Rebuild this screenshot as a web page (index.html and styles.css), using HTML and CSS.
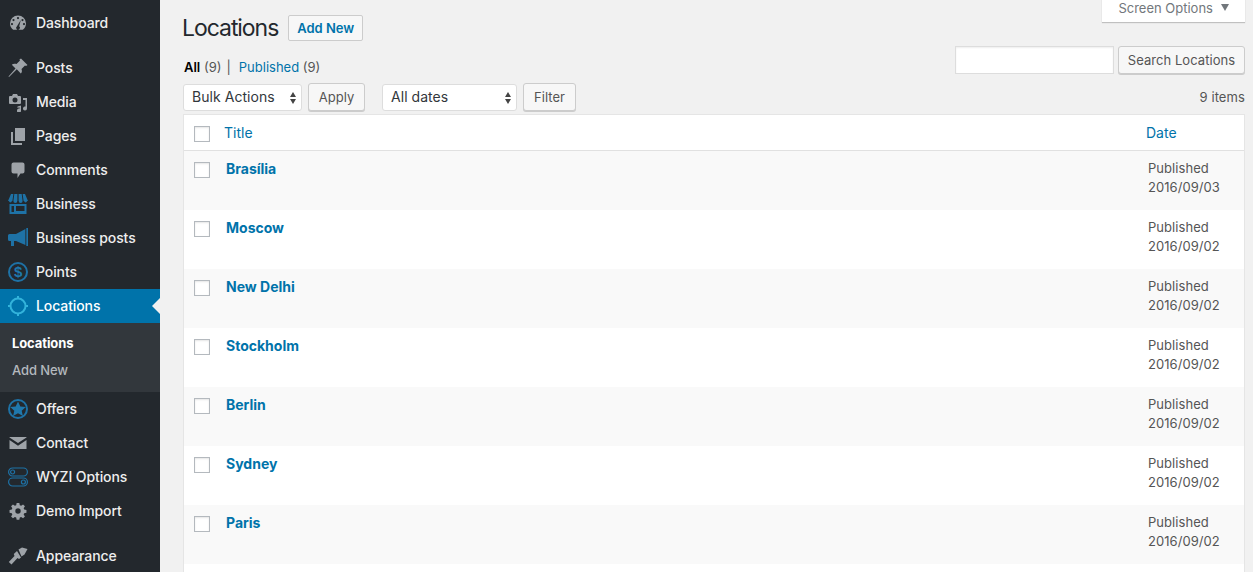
FILE: index.html
```html
<!DOCTYPE html>
<html lang="en">
<head>
<meta charset="utf-8">
<title>Locations</title>
<link rel="stylesheet" href="styles.css">
</head>
<body>
<div class="layout">
  <nav class="sidebar">
    <ul class="menu">
      <li class="item">
        <svg class="ico" viewBox="0 0 20 20"><path fill-rule="evenodd" d="M10 2.500a8 8 0 0 0-8 8c0 2.600 1.200 4.900 3.200 6.300h9.600A8 8 0 0 0 18 10.500a8 8 0 0 0-8-8zM10 4a1.100 1.100 0 1 1 0 2.200A1.100 1.100 0 0 1 10 4zM5.500 6a1.100 1.100 0 1 1 0 2.200A1.100 1.100 0 0 1 5.500 6zM14.500 6a1.100 1.100 0 1 1 0 2.200 1.100 1.100 0 0 1 0-2.200zM4 10a1.100 1.100 0 1 1 0 2.200A1.100 1.100 0 0 1 4 10zM16 10a1.100 1.100 0 1 1 0 2.200A1.100 1.100 0 0 1 16 10zM12.800 7l-1.600 6.300a1.900 1.900 0 1 1-2.400.1z"/></svg>
        <span>Dashboard</span>
      </li>
      <li class="item gap">
        <svg class="ico" viewBox="0 0 20 20"><path d="M13 .5l6.500 6.500-1.500 1-1-.6-3.500 3.500c.8 2 .4 3.600-.7 4.700L8.800 11.200 1 19l-.5-.5 7-8-3.700-3.700c1.100-1.100 2.900-1.400 4.700-.7L12 2.600l-.6-1z"/></svg>
        <span>Posts</span>
      </li>
      <li class="item">
        <svg class="ico" viewBox="0 0 20 20"><path fill-rule="evenodd" d="M2 4h2l1-2h4l1 2h2a1 1 0 0 1 1 1v6a1 1 0 0 1-1 1H2a1 1 0 0 1-1-1V5a1 1 0 0 1 1-1zm5 1.500a2.500 2.500 0 1 0 0 5 2.500 2.500 0 0 0 0-5zM15 6h4v10.500a2 2 0 1 1-1.500-1.900V8H15zM9.500 14.500L13 13.600v5a2 2 0 1 1-1.500-1.900v-1.400L9.500 16z"/></svg>
        <span>Media</span>
      </li>
      <li class="item">
        <svg class="ico" viewBox="0 0 20 20"><path d="M7 2h10v13H7zM3 6h2v11h9v2H3z"/></svg>
        <span>Pages</span>
      </li>
      <li class="item">
        <svg class="ico" viewBox="0 0 20 20"><path d="M5.500 2.500h9a2 2 0 0 1 2 2v7a2 2 0 0 1-2 2H12.500L9.500 18v-4.500h-4a2 2 0 0 1-2-2v-7a2 2 0 0 1 2-2z"/></svg>
        <span>Comments</span>
      </li>
      <li class="item">
        <svg class="ico accent" viewBox="0 0 20 20"><path d="M3 0h2.400L4.400 7H0zM6.300 0h3.100v7H5.400zM10.600 0h3.100l.9 7h-4zM14.600 0H17l3 7h-4.400z"/><path d="M1 7h2.800a1.400 1.400 0 0 1-2.800 0zM5.400 7h3.900a1.950 1.950 0 0 1-3.900 0zM10.700 7h3.900a1.950 1.950 0 0 1-3.900 0zM16.200 7H19a1.400 1.400 0 0 1-2.800 0z"/><path fill-rule="evenodd" d="M1.500 10h17v10h-17zM3.500 12v6H6v-6zM8 12v5h8.500v-5z"/></svg>
        <span>Business</span>
      </li>
      <li class="item">
        <svg class="ico accent" viewBox="0 0 20 20"><path d="M18.300 0H20v18h-1.700zM17.400 1v16L8 13H6v5H3v-5H1.500A1.500 1.500 0 0 1 0 11.500v-4A1.500 1.500 0 0 1 1.500 6H8z"/></svg>
        <span>Business posts</span>
      </li>
      <li class="item">
        <svg class="ico" viewBox="0 0 20 20"><circle class="ring" cx="10" cy="10" r="9"/><text class="dollar" x="10" y="15">$</text></svg>
        <span>Points</span>
      </li>
      <li class="item current">
        <svg class="ico" viewBox="0 0 20 20"><circle class="target" cx="10" cy="10" r="7.500"/><path class="target" d="M10 0v3M10 17v3M0 10h3M17 10h3"/></svg>
        <span>Locations</span>
      </li>
      <li>
        <ul class="submenu">
          <li class="sub-item sub-current">Locations</li>
          <li class="sub-item">Add New</li>
        </ul>
      </li>
      <li class="item">
        <svg class="ico" viewBox="0 0 20 20"><circle class="ring" cx="10" cy="10" r="9"/><path class="star" d="M10 2.500l2.300 5 5.500.6-4.100 3.600 1.200 5.400-4.900-2.800-4.900 2.800 1.200-5.400L2.200 8.100l5.500-.6z"/></svg>
        <span>Offers</span>
      </li>
      <li class="item">
        <svg class="ico" viewBox="0 0 20 20"><path d="M1.500 4h17v.5L10 10 1.500 4.500zM1.500 7l8.500 5.800L18.500 7v9h-17z"/></svg>
        <span>Contact</span>
      </li>
      <li class="item">
        <svg class="ico" viewBox="0 0 20 20"><rect class="ring thin" x=".6" y="1" width="18.800" height="8" rx="4"/><circle class="ring thin" cx="4.600" cy="5" r="2"/><rect class="ring thin" x=".6" y="11" width="18.800" height="8" rx="4"/><circle class="ring thin" cx="15.400" cy="15" r="2"/></svg>
        <span>WYZI Options</span>
      </li>
      <li class="item">
        <svg class="ico" viewBox="0 0 20 20"><path fill-rule="evenodd" d="M8.500 1.500h3l.5 2.500 1.500.6 2.100-1.400 2.100 2.100-1.400 2.100.6 1.500 2.500.5v3l-2.500.5-.6 1.500 1.400 2.100-2.100 2.100-2.100-1.400-1.500.6-.5 2.500h-3l-.5-2.500-1.500-.6-2.100 1.400-2.100-2.100 1.400-2.100-.6-1.500-2.500-.5v-3l2.500-.5.6-1.500-1.400-2.100 2.100-2.100 2.100 1.400 1.500-.6zM10 7.500a3 3 0 1 0 0 6 3 3 0 0 0 0-6z" transform="translate(1 1) scale(.9) translate(0 -.5)"/></svg>
        <span>Demo Import</span>
      </li>
      <li class="item gap last">
        <svg class="ico" viewBox="0 0 20 20"><path d="M10.500 3.500L14 1.500l5.500 1.500-3 5.500-3 2zM9 5l4 6.500-2 1.500-1.500-1-6 6.500L.8 16l5.700-6-.7-2z"/></svg>
        <span>Appearance</span>
      </li>
    </ul>
  </nav>

  <main class="content">
    <button class="screen-options" type="button">Screen Options <span class="caret"></span></button>

    <header class="heading">
      <h1 class="title">Locations</h1>
      <a class="add-new">Add New</a>
    </header>

    <div class="filter-row">
      <ul class="views">
        <li><b>All</b> <span class="count">(9)</span></li>
        <li class="sep">|</li>
        <li><a class="link">Published</a> <span class="count">(9)</span></li>
      </ul>
      <form class="search">
        <input class="search-input" type="text" aria-label="Search">
        <button class="btn btn-search" type="button">Search Locations</button>
      </form>
    </div>

    <div class="toolbar">
      <div class="select select-bulk">Bulk Actions</div>
      <button class="btn btn-apply" type="button">Apply</button>
      <div class="select select-dates">All dates</div>
      <button class="btn btn-filter" type="button">Filter</button>
      <span class="total">9 items</span>
    </div>

    <table class="list">
      <thead>
        <tr>
          <th class="col-check"><span class="check"></span></th>
          <th class="col-title"><a class="link">Title</a></th>
          <th class="col-date"><a class="link">Date</a></th>
        </tr>
      </thead>
      <tbody>
        <tr>
          <td class="col-check"><span class="check"></span></td>
          <td class="cell-title"><a class="row-link">Brasília</a></td>
          <td class="cell-date">Published<br>2016/09/03</td>
        </tr>
        <tr>
          <td class="col-check"><span class="check"></span></td>
          <td class="cell-title"><a class="row-link">Moscow</a></td>
          <td class="cell-date">Published<br>2016/09/02</td>
        </tr>
        <tr>
          <td class="col-check"><span class="check"></span></td>
          <td class="cell-title"><a class="row-link">New Delhi</a></td>
          <td class="cell-date">Published<br>2016/09/02</td>
        </tr>
        <tr>
          <td class="col-check"><span class="check"></span></td>
          <td class="cell-title"><a class="row-link">Stockholm</a></td>
          <td class="cell-date">Published<br>2016/09/02</td>
        </tr>
        <tr>
          <td class="col-check"><span class="check"></span></td>
          <td class="cell-title"><a class="row-link">Berlin</a></td>
          <td class="cell-date">Published<br>2016/09/02</td>
        </tr>
        <tr>
          <td class="col-check"><span class="check"></span></td>
          <td class="cell-title"><a class="row-link">Sydney</a></td>
          <td class="cell-date">Published<br>2016/09/02</td>
        </tr>
        <tr>
          <td class="col-check"><span class="check"></span></td>
          <td class="cell-title"><a class="row-link">Paris</a></td>
          <td class="cell-date">Published<br>2016/09/02</td>
        </tr>
        <tr class="row-end">
          <td class="col-check"></td>
          <td class="cell-title"></td>
          <td class="cell-end"></td>
        </tr>
      </tbody>
    </table>
  </main>
</div>
</body>
</html>
```

FILE: styles.css
```css
* { box-sizing: border-box; }

html, body {
  margin: 0;
  height: 572px;
  overflow: hidden;
}

body {
  background: #f1f1f1;
  color: #444;
  font-family: Inter, "Liberation Sans", sans-serif;
  font-size: 13px;
}

ul { list-style: none; margin: 0; padding: 0; }

.layout { display: flex; height: 572px; }

/* Sidebar */
.sidebar {
  flex: 0 0 160px;
  background: #23282d;
  padding-top: 6px;
  overflow: hidden;
}

.item {
  position: relative;
  display: flex;
  align-items: center;
  gap: 8px;
  height: 34px;
  padding-left: 8px;
  color: #eee;
  font-size: 14px;
  font-weight: 500;
  letter-spacing: -.1px;
}

.item span { margin-bottom: 2px; }

.item.gap { margin-top: 11px; }

.item.last { height: 33px; }
.item.last span { margin-bottom: 1px; }
.item.last .ico { margin-top: 1px; }

.ico {
  flex: none;
  width: 20px;
  height: 20px;
  fill: #9ea3a8;
}

.accent { fill: #1e72a6; }

.ring { fill: none; stroke: #1e72a6; stroke-width: 2; }
.ring.thin { stroke-width: 1.200; }
.star { fill: #1f78ad; }
.dollar {
  fill: #1f78ad;
  font-family: "Liberation Sans", sans-serif;
  font-size: 15px;
  font-weight: 700;
  text-anchor: middle;
}

.target { fill: none; stroke: #33b3db; stroke-width: 2; }

.current { background: #0073aa; color: #fff; }

.current::after {
  content: "";
  position: absolute;
  right: 0;
  top: 50%;
  margin-top: -8px;
  border: 8px solid transparent;
  border-left-width: 0;
  border-right-color: #f1f1f1;
}

.submenu {
  display: flex;
  flex-direction: column;
  background: #32373c;
  height: 69px;
  padding: 7px 0 8px;
}

.sub-item {
  flex: 1;
  display: flex;
  align-items: center;
  padding: 0 0 2px 12px;
  font-size: 13px;
  font-weight: 500;
  letter-spacing: -.1px;
  color: #b4b9be;
}

.sub-current { color: #fff; font-weight: 700; }

/* Content */
.content {
  position: relative;
  flex: 1;
  min-width: 0;
  padding: 15px 8px 0 23px;
}

.screen-options {
  position: absolute;
  top: -1px;
  right: 8px;
  width: 143px;
  height: 23px;
  padding: 0 0 5px 0;
  background: #fff;
  border: 0;
  box-shadow: 0 1px 1px rgba(0, 0, 0, .2);
  color: #72777c;
  font: 13px Inter, "Liberation Sans", sans-serif;
}

.caret {
  display: inline-block;
  margin-left: 4px;
  vertical-align: 2px;
  border: 4.500px solid transparent;
  border-top: 7px solid #72777c;
  border-bottom: 0;
}

.heading {
  display: flex;
  align-items: center;
  height: 26px;
  gap: 10px;
}

.title {
  margin: 0 0 0 -1px;
  color: #23282d;
  font-size: 23px;
  font-weight: 400;
  letter-spacing: -1.050px;
}

.add-new {
  display: flex;
  align-items: center;
  justify-content: center;
  width: 75px;
  height: 26px;
  background: #f7f7f7;
  border: 1px solid #ccc;
  border-radius: 2px;
  color: #0073aa;
  font-size: 13px;
  font-weight: 600;
}

.filter-row {
  display: flex;
  justify-content: space-between;
  align-items: flex-start;
  height: 28px;
  margin-top: 5px;
}

.views {
  display: flex;
  gap: 6px;
  margin: 13px 0 0 1px;
  line-height: 16px;
}

.views b { color: #000; font-weight: 600; }
.count { color: #555; }
.sep { color: #555; margin: 0 2px 0 -1px; }
.link { color: #0073aa; }

.search { display: flex; gap: 4px; }

.search-input {
  width: 159px;
  height: 28px;
  background: #fff;
  border: 1px solid #ddd;
  box-shadow: inset 0 1px 2px rgba(0, 0, 0, .07);
  padding: 0;
}

.btn {
  height: 28px;
  padding: 0;
  background: #f7f7f7;
  border: 1px solid #ccc;
  border-radius: 3px;
  box-shadow: 0 1px 0 #ccc;
  color: #555;
  font: 13px Inter, "Liberation Sans", sans-serif;
  letter-spacing: .05px;
}

.btn-search { width: 127px; }
.btn-apply { width: 57px; margin-left: 6px; }
.btn-filter { width: 53px; margin-left: 6px; }

.toolbar {
  display: flex;
  align-items: center;
  height: 28px;
  margin-top: 9px;
}

.select {
  position: relative;
  height: 27px;
  line-height: 24px;
  padding-left: 8px;
  background: #fff;
  border: 1px solid #ddd;
  border-radius: 3px;
  color: #32373c;
  font-size: 14px;
  letter-spacing: .05px;
}

.select::before,
.select::after {
  content: "";
  position: absolute;
  right: 5px;
  border: 3.500px solid transparent;
}

.select::before { top: 7px; border-top: 0; border-bottom: 5px solid #444; }
.select::after { top: 14px; border-bottom: 0; border-top: 5px solid #444; }

.select-bulk { width: 119px; }
.select-dates { width: 135px; margin-left: 17px; }

.total { margin-left: auto; color: #555; letter-spacing: .1px; }

.list {
  width: 100%;
  margin-top: 3px;
  table-layout: fixed;
  border-collapse: separate;
  border-spacing: 0;
  background: #fff;
  border: 1px solid #e5e5e5;
  border-bottom: 0;
}

.list th, .list td { padding: 0; text-align: left; }

.list th {
  height: 36px;
  font-weight: 400;
  font-size: 14px;
  border-bottom: 1px solid #e1e1e1;
  vertical-align: middle;
}

.list td { height: 59px; vertical-align: top; }

.list .row-end td { height: 8px; }

.list tbody tr:nth-child(odd) { background: #f9f9f9; }
.list tbody tr.row-end { background: #fff; }

.col-check { width: 40px; padding-left: 10px !important; }
.col-date { width: 98px; }

.check {
  display: block;
  width: 16px;
  height: 16px;
  background: #fff;
  border: 1px solid #b4b9be;
  box-shadow: inset 0 1px 2px rgba(0, 0, 0, .1);
}

.list th .check { margin-top: 2px; }
.list td .check { margin-top: 11px; }

.row-link {
  display: block;
  margin: 9px 0 0 1px;
  color: #0073aa;
  font-size: 14px;
  font-weight: 700;
  line-height: 18px;
}

.cell-title { padding-left: 1px !important; }

.cell-date {
  padding: 8px 0 0 2px !important;
  line-height: 19px;
  color: #555;
  letter-spacing: .05px;
}
```
